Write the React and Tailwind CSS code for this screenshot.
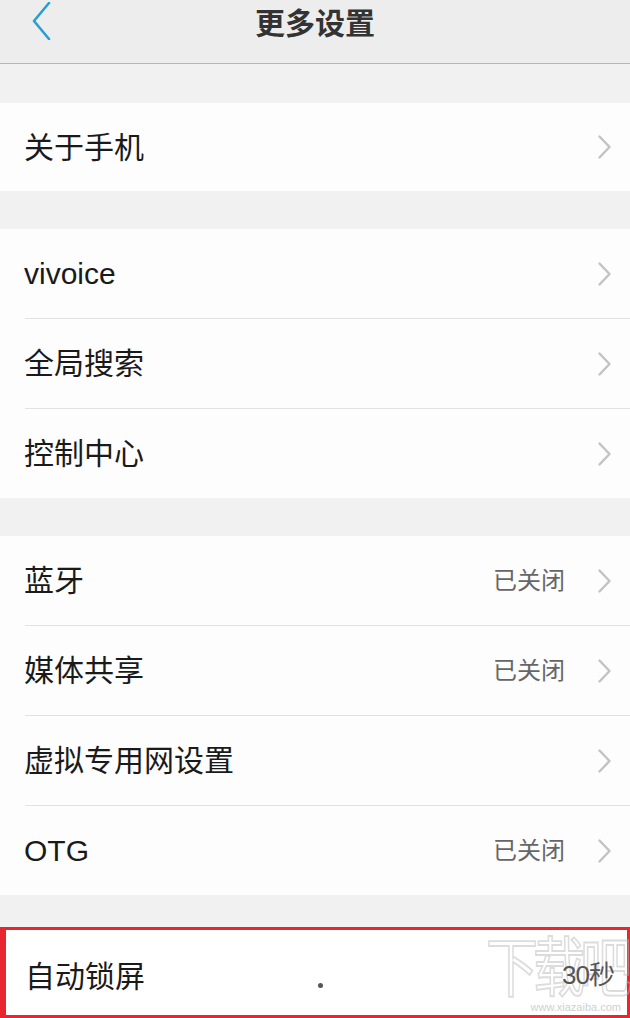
const font = { fontFamily: '"Liberation Sans", "Noto Sans CJK SC", sans-serif' };

function Chevron() {
    return (
        <svg className="mr-[18px]" width="15" height="26" viewBox="0 0 15 26">
            <path d="M2.5 2.5 L12.5 13 L2.5 23.5" fill="none" stroke="#c2c2c2" strokeWidth="2.4" strokeLinecap="round" strokeLinejoin="round" />
        </svg>
    );
}

function Row({ label, value, last, h = 'h-[89px]' }) {
    return (
        <div className={`flex items-center bg-[#fdfdfd] ${h}`}>
            <div className={`flex-1 h-full flex items-center ml-[25px] ${last ? '' : 'border-b border-[#e2e2e2]'}`}>
                <span className="flex-1 text-[30px] text-[#1a1a1a] -ml-[1px]">{label}</span>
                {value && <span className="text-[24px] text-[#666] mr-[32px]">{value}</span>}
                <Chevron />
            </div>
        </div>
    );
}

function Gap({ h }) {
    return <div className={`bg-[#f1f1f1] ${h}`} />;
}

export default function App() {
    return (
        <div className="w-[630px] h-[1018px] overflow-hidden bg-[#f1f1f1]" style={font}>
            {/* header */}
            <div className="relative h-[64px] bg-[#ededed] border-b border-[#b5b5b5] flex justify-center">
                <svg className="absolute left-[32px] top-[2px]" width="19" height="38" viewBox="0 0 19 38">
                    <path d="M17 1 L2 19 L17 37" fill="none" stroke="#2a9dd4" strokeWidth="2.6" strokeLinecap="round" strokeLinejoin="round" />
                </svg>
                <span className="mt-[1px] text-[30px] font-bold text-[#333]">更多设置</span>
            </div>

            <Gap h="h-[39px]" />
            <Row label="关于手机" last h="h-[88px]" />

            <Gap h="h-[38px]" />
            <Row label="vivoice" h="h-[90px]" />
            <Row label="全局搜索" h="h-[90px]" />
            <Row label="控制中心" last />

            <Gap h="h-[38px]" />
            <Row label="蓝牙" value="已关闭" h="h-[90px]" />
            <Row label="媒体共享" value="已关闭" h="h-[90px]" />
            <Row label="虚拟专用网设置" h="h-[90px]" />
            <Row label="OTG" value="已关闭" last />

            <Gap h="h-[32px]" />
            {/* highlighted row */}
            <div className="relative h-[91px] bg-white border-[3px] border-l-[6px] border-[#e8262f] flex items-center">
                {/* watermark */}
                <div className="absolute right-[0px] top-[6px] flex flex-col items-end pointer-events-none">
                    <span className="text-[52px] leading-none text-transparent tracking-[-5px] origin-top scale-y-[1.25]" style={{ WebkitTextStroke: '1.5px rgba(185,185,185,0.5)' }}>下载吧</span>
                    <span className="text-[11px] text-[#cfcfcf] leading-none mt-[14px] mr-[6px]">www.xiazaiba.com</span>
                </div>
                <span className="relative flex-1 ml-[19px] mt-[8px] text-[30px] text-[#1a1a1a]">自动锁屏</span>
                <span className="relative text-[26px] text-[#555] mr-[13px] mt-[6px] tracking-[-1px]">30秒</span>
                <span className="absolute left-[312px] top-[53px] w-[5px] h-[5px] rounded-full bg-[#555]" />
            </div>
        </div>
    );
}
